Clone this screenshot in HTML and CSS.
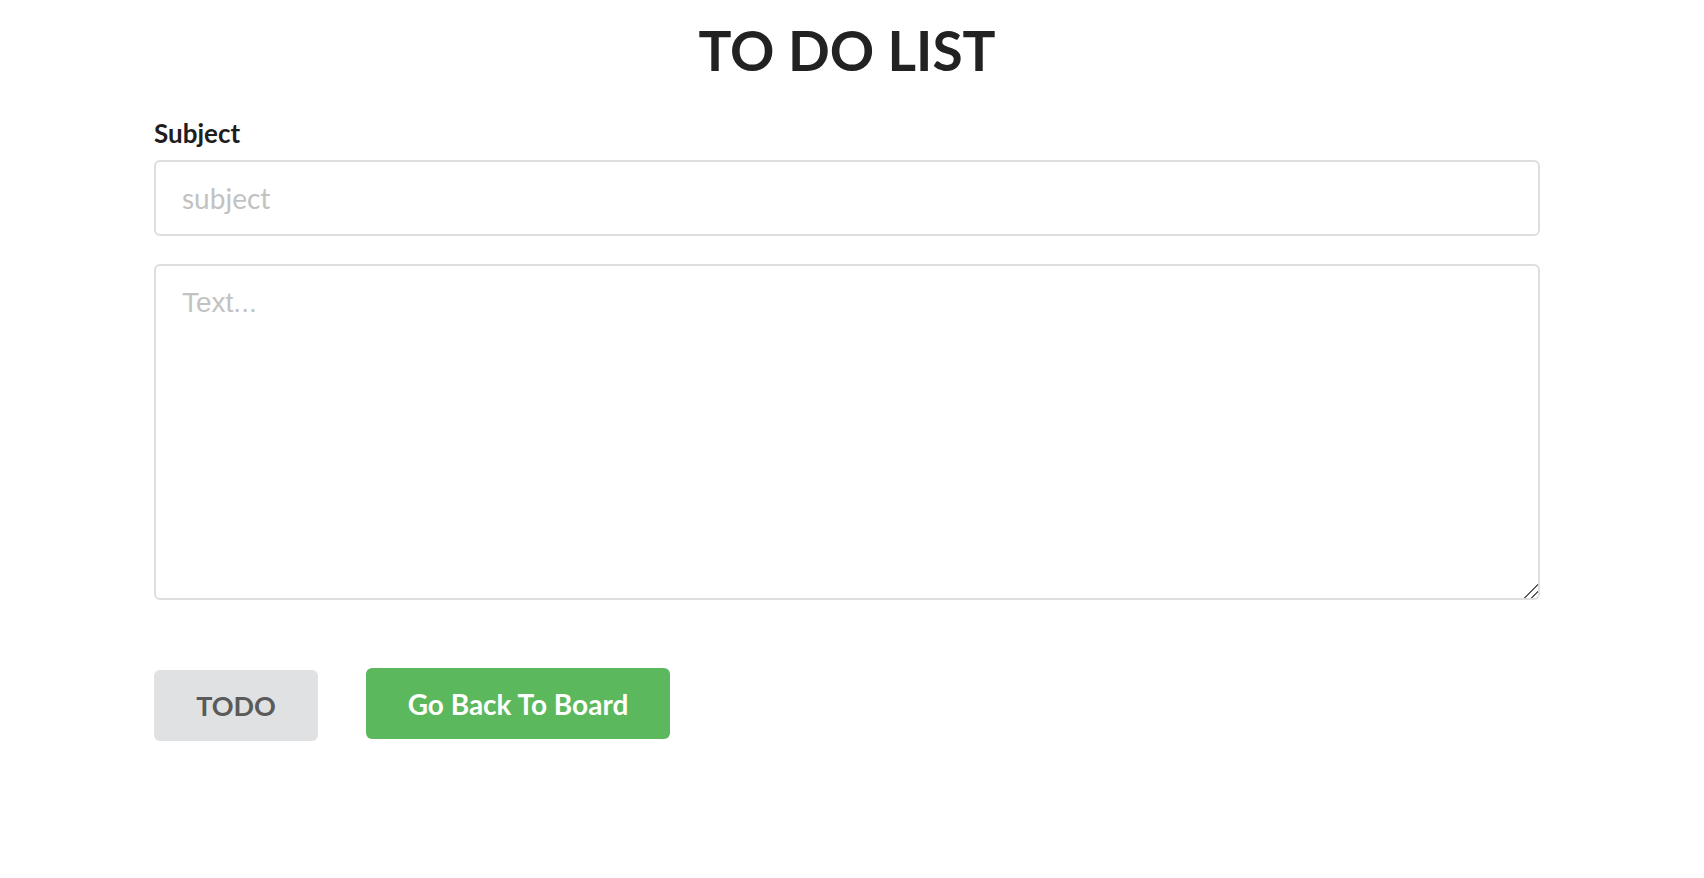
FILE: index.html
```html
<!DOCTYPE html>
<html lang="en">
<head>
<meta charset="utf-8">
<title>To Do List</title>
<link rel="stylesheet" href="styles.css">
</head>
<body>
  <main class="page">
    <h1 class="title">TO DO LIST</h1>
    <form class="form">
      <label class="label" for="subject">Subject</label>
      <input class="input" id="subject" type="text" placeholder="subject">
      <textarea class="textarea" placeholder="Text..."></textarea>
      <div class="actions">
        <button type="button" class="btn btn-grey">TODO</button>
        <button type="button" class="btn btn-green">Go Back To Board</button>
      </div>
    </form>
  </main>
</body>
</html>
```

FILE: styles.css
```css
html, body {
  margin: 0;
  padding: 0;
  background: #ffffff;
}

body {
  font-family: "Lato", "Liberation Sans", sans-serif;
  color: #222222;
}

.page {
  width: 1386px;
  margin-left: 154px;
  padding-top: 23px;
}

.title {
  margin: 0;
  font-size: 55px;
  line-height: 55px;
  font-weight: 700;
  text-align: center;
  color: #222222;
}

.form {
  display: flex;
  flex-direction: column;
  margin-top: 42px;
}

.label {
  font-size: 26px;
  line-height: 26px;
  font-weight: 700;
  color: #1e1e1e;
  margin-bottom: 14px;
}

.input {
  box-sizing: border-box;
  height: 76px;
  width: 100%;
  border: 2px solid #dedede;
  border-radius: 6px;
  padding: 0 26px;
  font-family: "Lato", sans-serif;
  font-size: 28px;
  color: #333333;
  outline: none;
}

.input::placeholder {
  color: #c2c2c2;
}

.textarea {
  box-sizing: border-box;
  margin-top: 28px;
  height: 336px;
  width: 100%;
  border: 2px solid #dedede;
  border-radius: 6px;
  padding: 21px 26px;
  font-family: "Liberation Sans", Arial, sans-serif;
  font-size: 28px;
  color: #333333;
  outline: none;
  resize: vertical;
}

.textarea::placeholder {
  color: #c2c2c2;
}

.textarea::-webkit-resizer {
  background: linear-gradient(135deg,
    transparent 0 52%,
    #5a5a5a 52% 60%,
    transparent 60% 74%,
    #5a5a5a 74% 82%,
    transparent 82%);
}

.actions {
  display: flex;
  align-items: flex-start;
  gap: 48px;
  margin-top: 68px;
}

.btn {
  height: 71px;
  border: none;
  border-radius: 6px;
  font-family: "Lato", sans-serif;
  font-weight: 700;
  cursor: pointer;
}

.btn-grey {
  margin-top: 2px;
  width: 164px;
  background: #e0e1e2;
  color: #5a5a5a;
  font-size: 27px;
}

.btn-green {
  width: 304px;
  background: #5cb85c;
  color: #ffffff;
  font-size: 28px;
}
```
